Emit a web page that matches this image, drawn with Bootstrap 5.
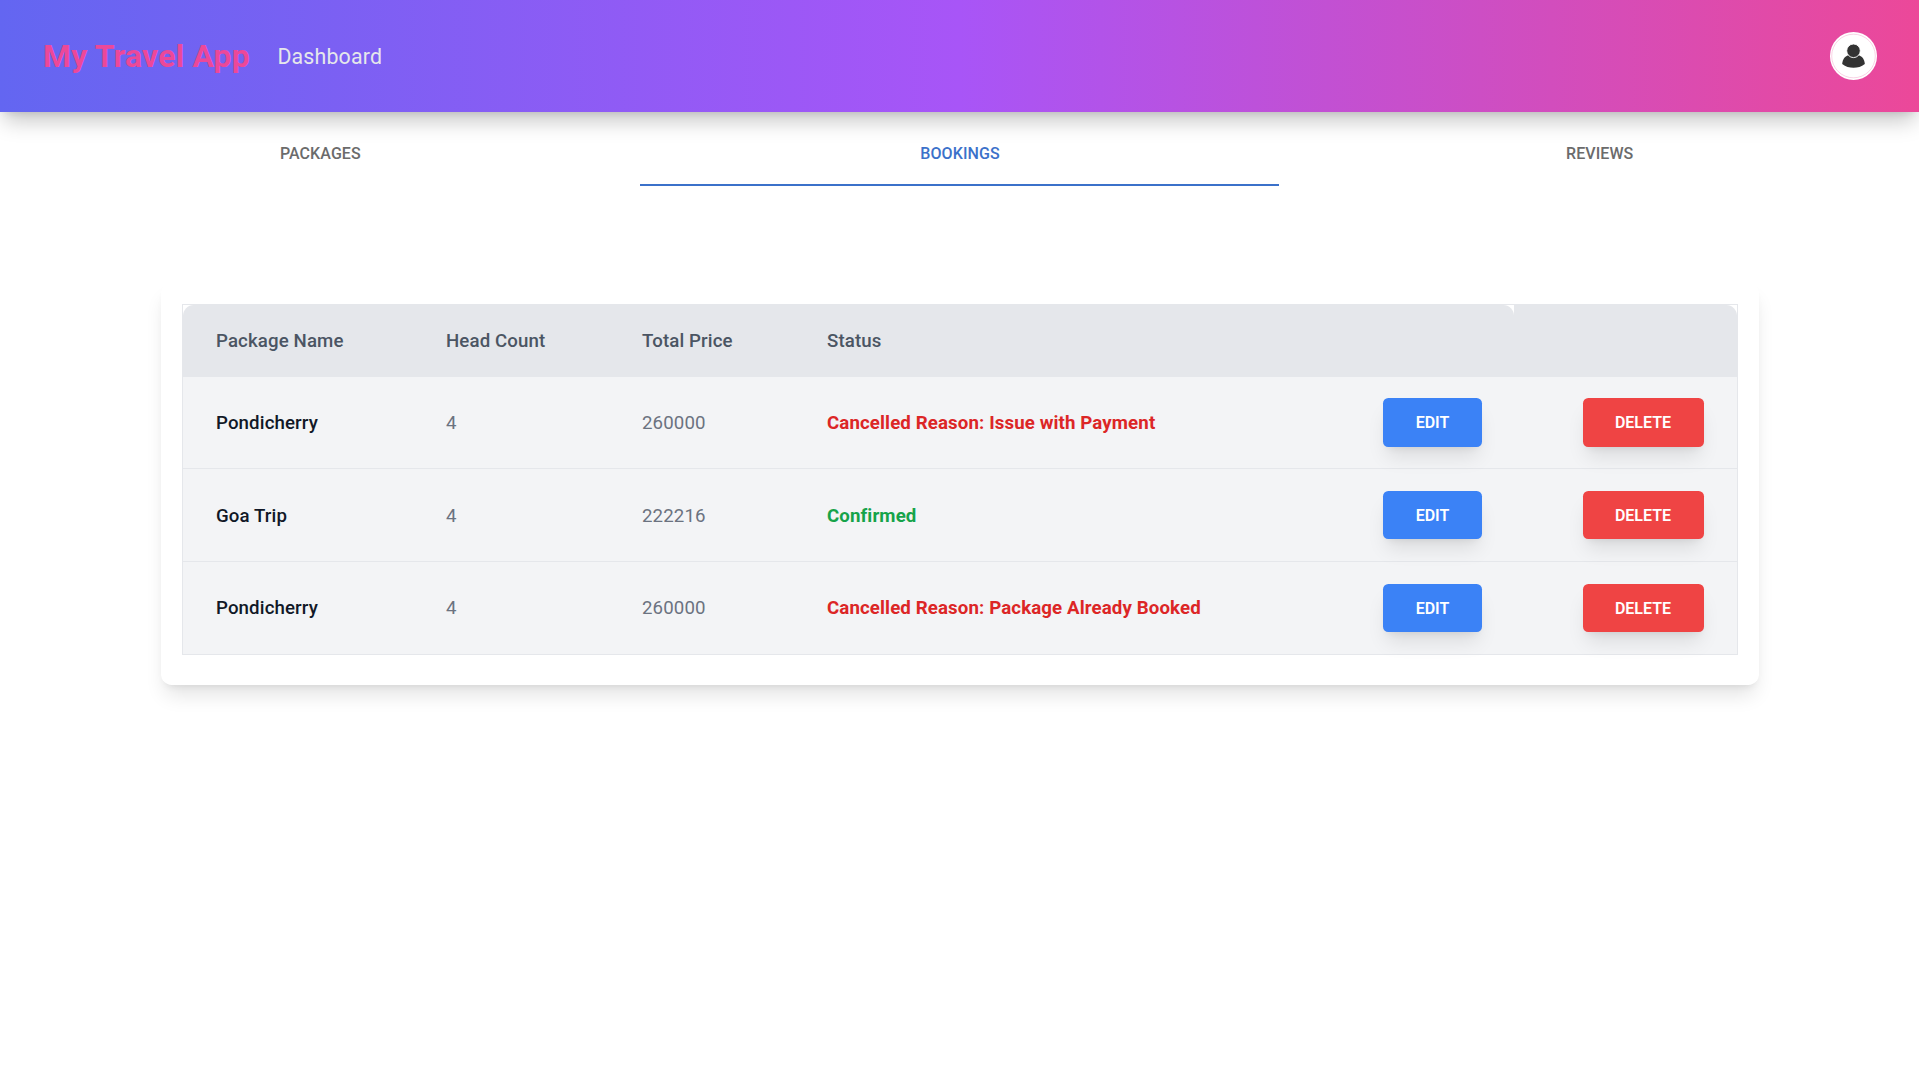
<!DOCTYPE html>
<html lang="en">
<head>
<meta charset="utf-8">
<meta name="viewport" content="width=device-width, initial-scale=1">
<title>My Travel App</title>
<link href="https://cdn.jsdelivr.net/npm/bootstrap@5.3.0/dist/css/bootstrap.min.css" rel="stylesheet">
<style>
  body { font-family: Roboto, "Liberation Sans", sans-serif; font-size: 18.67px; line-height: 26.67px; background: #fff; }
  .app-bar { height: 112px; padding: 0 42px; z-index: 2; background: linear-gradient(to right, #6366f1, #a855f7, #ec4899); box-shadow: 0 13.3px 20px -4px rgba(0,0,0,.22), 0 5.3px 8px -5.3px rgba(0,0,0,.12); }
  .app-brand, .app-brand:hover { color: #ec4899; font-size: 32px; font-weight: 700; letter-spacing: .16px; margin: 0 27.5px 0 1px; padding: 0; }
  .app-link, .app-link:hover { color: #e5e7eb; font-size: 21.33px; letter-spacing: .18px; padding-top: 2px; }
  .avatar-ring { width: 48px; height: 48px; }
  .app-tabs .nav-link { height: 74px; padding: 12.5px 0 0 1px; border-radius: 0; border-bottom: 2px solid transparent; color: #6b6b6b; font-size: 16px; font-weight: 500; display: flex; align-items: center; justify-content: center; letter-spacing: .08px; }
  .app-tabs .nav-link.active { color: #3b71ca; border-bottom-color: #3b71ca; }
  .booking-panel { width: 1598px; margin-top: 97px; padding: 21px 21px 30px; border-radius: 10.7px; background: #fff; box-shadow: 0 13.3px 20px -4px rgba(0,0,0,.11), 0 5.3px 8px -5.3px rgba(0,0,0,.11); }
  .table-frame { border: 1px solid #e5e7eb; }
  .booking-table { table-layout: fixed; margin: 0; letter-spacing: .12px; border-collapse: separate; border-spacing: 0; }
  .booking-table > thead > tr > th { height: 72px; padding: 0 32px 0 33.5px; border: 0; background: #e5e7eb; color: #4b5563; font-weight: 500; vertical-align: middle; }
  .booking-table > thead > tr > th:first-child { border-top-left-radius: 10.7px; }
  .booking-table > thead > tr > th:nth-last-child(-n+2) { border-top-right-radius: 10.7px; }
  .booking-table > tbody > tr > td { height: 92px; padding: 1px 32px 0 33.5px; border: 0; border-bottom: 1px solid #e5e7eb; background: #f3f4f6; color: #6b7280; }
  .booking-table > tbody > tr:nth-child(2) > td { height: 93px; padding-top: 2px; }
  .booking-table > tbody > tr:last-child > td { border-bottom: 0; padding-top: 0; }
  .booking-table > tbody > tr > td.text-end { padding-top: 0; }
  .booking-table > tbody > tr > td:last-child { padding-right: 33px; }
  .booking-table > tbody > tr > td:nth-child(3), .booking-table > thead > tr > th:nth-child(3) { padding-left: 32.5px; }
  .booking-table > tbody > tr > td.trip-name { color: #111827; font-weight: 500; }
  .booking-table > tbody > tr > td.state-cancelled { color: #dc2626; font-weight: 700; }
  .booking-table > tbody > tr > td.state-confirmed { color: #16a34a; font-weight: 700; }
  .action-btn, .action-btn:hover { height: 48.5px; padding: 1px 0 0; border: 0; border-radius: 5.3px; color: #fff; font-size: 16px; font-weight: 600; box-shadow: 0 13.3px 20px -4px rgba(0,0,0,.1), 0 5.3px 8px -5.3px rgba(0,0,0,.1); }
  .btn-change, .btn-change:hover { background: #3b82f6; width: 99px; }
  .btn-remove, .btn-remove:hover { background: #ef4444; width: 121px; }
</style>
</head>
<body class="min-vh-100">
<nav class="app-bar position-relative d-flex align-items-center">
  <a class="navbar-brand app-brand" href="#">My Travel App</a>
  <a class="app-link text-decoration-none" href="#">Dashboard</a>
  <a class="ms-auto d-flex" href="#" aria-label="Account">
    <svg class="avatar-ring" viewBox="0 0 48 48">
      <ellipse cx="24.5" cy="24" rx="23.5" ry="24" fill="#fff"/>
      <circle cx="24.5" cy="24" r="21.8" fill="none" stroke="#f5b5d3" stroke-width=".6"/>
      <path d="M13.2 32C13.4 27.5 16 23.6 20 23.2H29C33 23.6 35.6 27.5 35.8 32 32.5 34.8 28.5 35.8 24.5 35.8S16.5 34.8 13.2 32Z" fill="#333"/>
      <circle cx="24.5" cy="18.8" r="6.8" fill="#333" stroke="#fff" stroke-width=".9"/>
    </svg>
  </a>
</nav>
<ul class="nav nav-justified app-tabs">
  <li class="nav-item"><a class="nav-link" href="#">PACKAGES</a></li>
  <li class="nav-item"><a class="nav-link active" href="#">BOOKINGS</a></li>
  <li class="nav-item"><a class="nav-link" href="#">REVIEWS</a></li>
</ul>
<main class="booking-panel mx-auto">
  <div class="table-frame">
    <table class="table booking-table align-middle">
      <colgroup><col style="width:230px"><col style="width:197px"><col style="width:184px"><col style="width:556px"><col style="width:164px"><col></colgroup>
      <thead>
        <tr><th>Package Name</th><th>Head Count</th><th>Total Price</th><th>Status</th><th></th><th></th></tr>
      </thead>
      <tbody>
        <tr><td class="trip-name">Pondicherry</td><td>4</td><td>260000</td><td class="state-cancelled">Cancelled Reason: Issue with Payment</td><td class="text-end"><button class="btn action-btn btn-change">EDIT</button></td><td class="text-end"><button class="btn action-btn btn-remove">DELETE</button></td></tr>
        <tr><td class="trip-name">Goa Trip</td><td>4</td><td>222216</td><td class="state-confirmed">Confirmed</td><td class="text-end"><button class="btn action-btn btn-change">EDIT</button></td><td class="text-end"><button class="btn action-btn btn-remove">DELETE</button></td></tr>
        <tr><td class="trip-name">Pondicherry</td><td>4</td><td>260000</td><td class="state-cancelled">Cancelled Reason: Package Already Booked</td><td class="text-end"><button class="btn action-btn btn-change">EDIT</button></td><td class="text-end"><button class="btn action-btn btn-remove">DELETE</button></td></tr>
      </tbody>
    </table>
  </div>
</main>
<script src="https://cdn.jsdelivr.net/npm/bootstrap@5.3.0/dist/js/bootstrap.bundle.min.js"></script>
</body>
</html>
